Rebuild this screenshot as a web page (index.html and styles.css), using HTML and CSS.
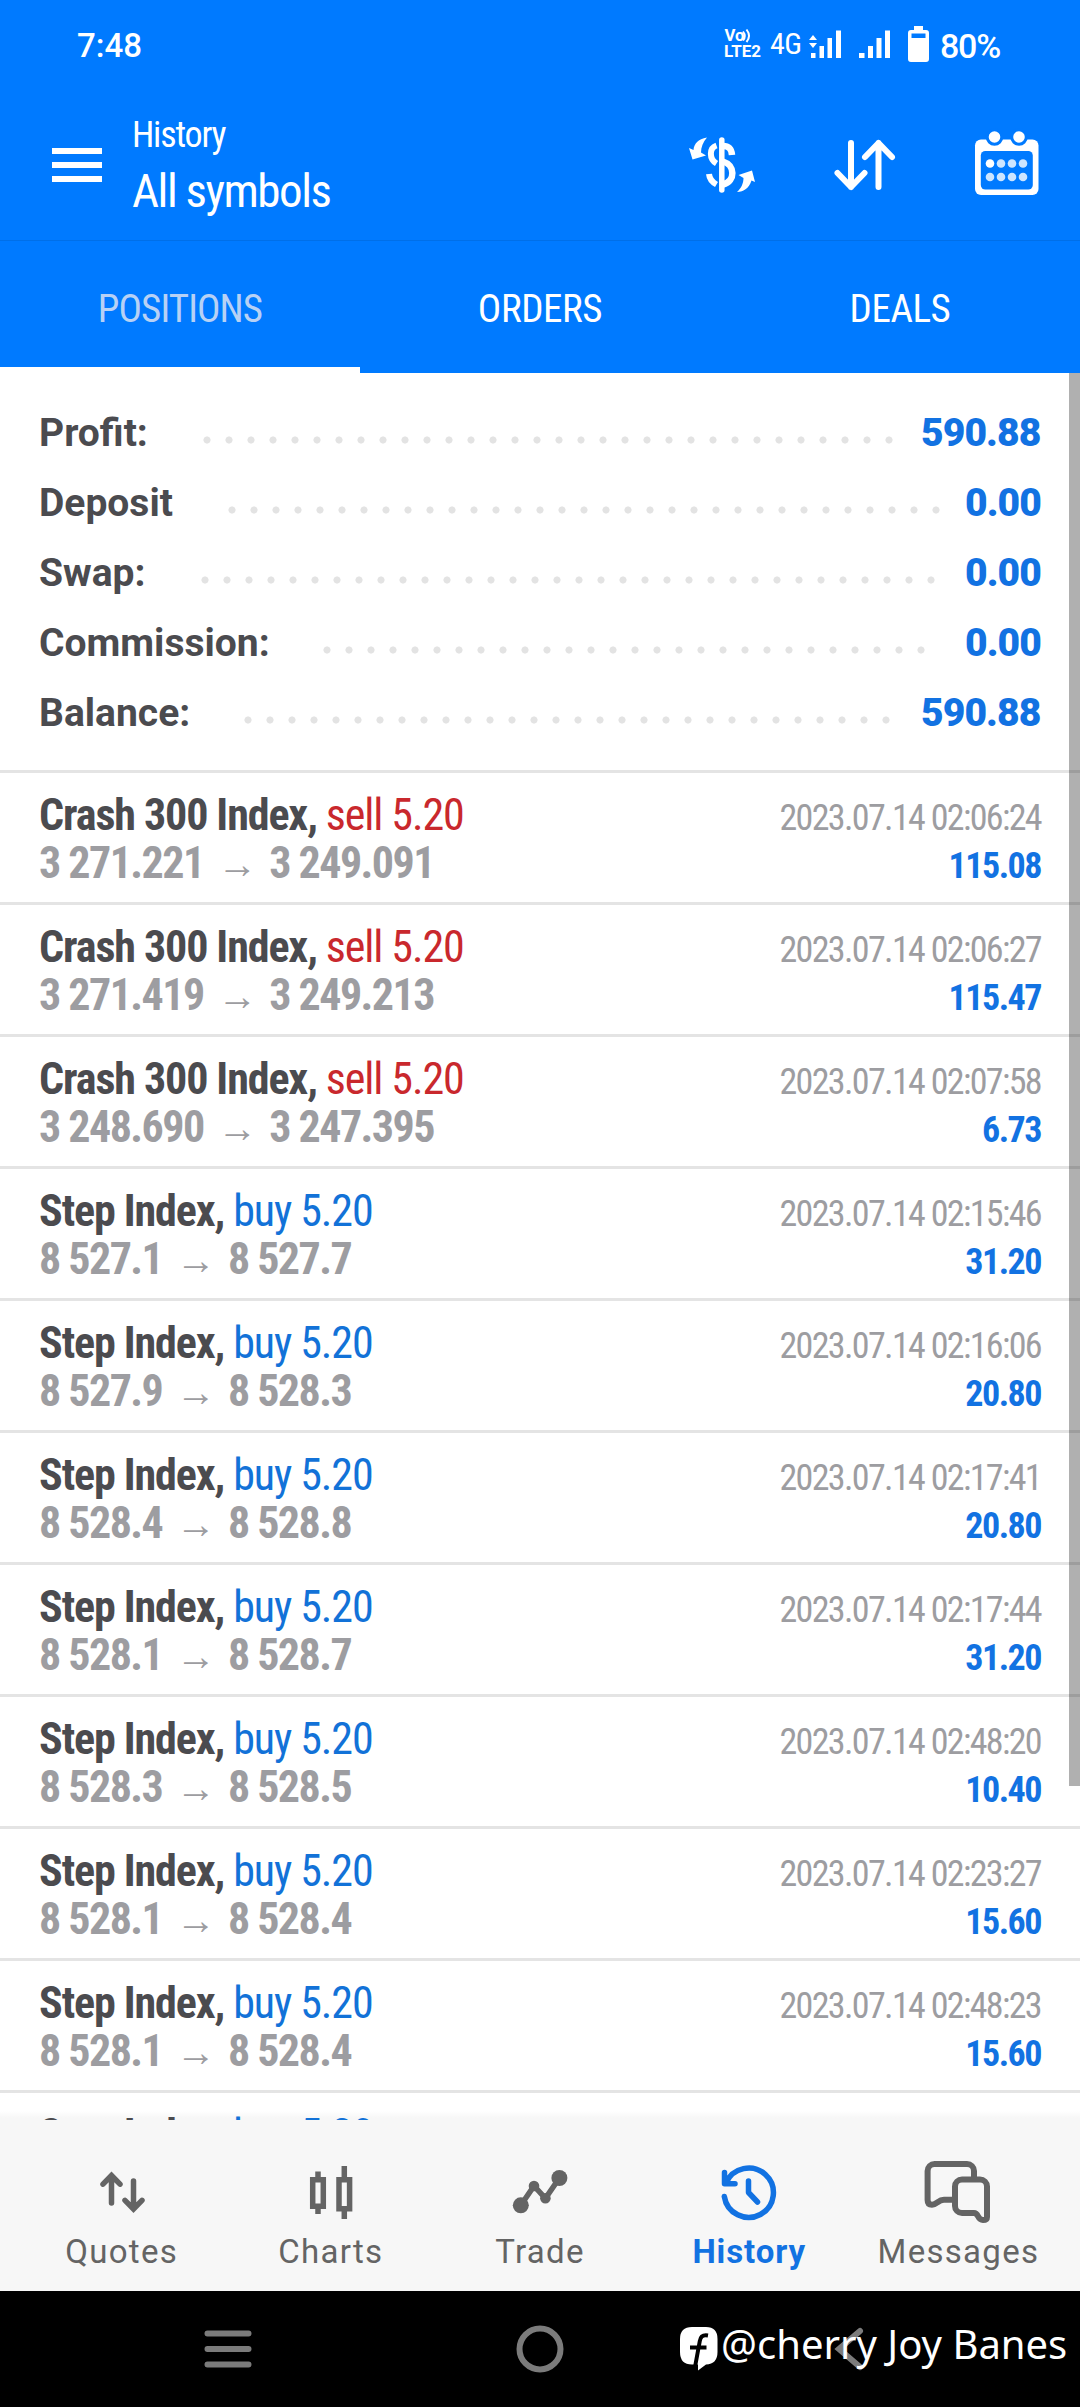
FILE: index.html
```html
<!DOCTYPE html>
<html lang="en">
<head>
<meta charset="utf-8">
<title>History</title>
<link rel="stylesheet" href="styles.css">
</head>
<body>
<div class="screen">
  <div class="statusbar">
    <span class="clock">7:48</span>
    <div class="status-right">
      <svg class="volte" width="40" height="34" viewBox="0 0 40 34">
        <text x="0.5" y="14" font-size="16.5" textLength="20" lengthAdjust="spacingAndGlyphs">Vo</text>
        <path d="M19 4.5q3.5 4.500 0 9M22.500 2.500q5 6.500 0 12.500" fill="none" stroke="#fff" stroke-width="2"/>
        <text x="0" y="30" font-size="17" textLength="37" lengthAdjust="spacingAndGlyphs">LTE2</text>
      </svg>
      <span class="net">4G</span>
      <svg class="signal" width="33" height="30" viewBox="0 0 33 30">
        <path d="M2 24h4.500v5H2zM10.500 17h4.500v12h-4.500zM18.500 9h4.500v20h-4.500zM27 1.500h5V29h-5zM4 6l4 5H0zM4 19l4-5H0z" fill="#fff"/>
      </svg>
      <svg class="signal2" width="32" height="30" viewBox="0 0 32 30">
        <path d="M0 24h5.500v5H0zM9 17h5v12H9zM17.500 9h5v20h-5zM26 1.500h5V29h-5z" fill="#fff"/>
      </svg>
      <svg class="battery" width="21" height="36" viewBox="0 0 21 36">
        <path fill-rule="evenodd" d="M6 0h9v4h3a3 3 0 0 1 3 3v26a3 3 0 0 1-3 3H3a3 3 0 0 1-3-3V7a3 3 0 0 1 3-3h3zM3.500 7.500v4.500h14V7.500z" fill="#fff"/>
      </svg>
      <span class="percent">80%</span>
    </div>
  </div>

  <header class="toolbar">
    <svg class="menu" width="50" height="34" viewBox="0 0 50 34"><path d="M0 0h50v6H0zM0 14h50v6H0zM0 28h50v6H0z" fill="#fff"/></svg>
    <div class="titles">
      <div class="subtitle">History</div>
      <div class="title">All symbols</div>
    </div>
    <div class="actions">
      <svg width="80" height="80" viewBox="0 0 80 80" fill="none" stroke="#fff" stroke-width="6">
        <path d="M41.800 20V70" stroke-width="5.500" stroke-linecap="round"/>
        <path d="M36.500 25.500C29 28 29 39 36.500 43.500M29 54C29.500 59.500 32 62 36.500 64.500"/>
        <path d="M43 26C49 26 51.500 29 52 35M43 41.500C55 45 56 61 43 64.500" stroke-width="6.500"/>
        <path d="M27 17.500C18 19 14 24 13.500 30L9 28L12.500 39.500L26 35.500L21 32.500C21 27 23 22 27 17.500ZM57 72C64 72 69 68 71.500 60.500L75 62L72 50.500L58.500 55L63.500 58C63.500 63 61.500 68 57 72Z" fill="#fff" stroke="none"/>
      </svg>
      <svg width="66" height="56" viewBox="0 0 66 56" fill="none" stroke="#fff" stroke-width="6" stroke-linecap="round" stroke-linejoin="round">
        <path d="M19 6V50M5.500 36L19 50L32.500 36M46.500 50V6M33 20L46.500 6L60 20"/>
      </svg>
      <svg width="64" height="64" viewBox="0 0 64 64">
        <rect x="0" y="8.500" width="63.500" height="55.500" rx="6" fill="#fff"/>
        <rect x="5.800" y="20" width="52" height="38.500" rx="4.500" fill="#007aff"/>
        <g fill="#fff" stroke="#007aff" stroke-width="3"><circle cx="19.500" cy="6" r="7.300"/><circle cx="44" cy="6" r="7.300"/></g>
        <g fill="#cde5ff"><circle cx="15" cy="32.500" r="4.300" fill="#fff"/><circle cx="26" cy="32.500" r="4.300"/><circle cx="37" cy="32.500" r="4.300"/><circle cx="48" cy="32.500" r="4.300"/><circle cx="15" cy="46" r="4.300"/><circle cx="26" cy="46" r="4.300"/><circle cx="37" cy="46" r="4.300"/><circle cx="48" cy="46" r="4.300"/></g>
      </svg>
    </div>
  </header>

  <nav class="tabs">
    <div class="tab active">POSITIONS</div>
    <div class="tab">ORDERS</div>
    <div class="tab">DEALS</div>
  </nav>

  <main class="content">
    <section class="summary">
      <div class="sum-row profit"><span>Profit:</span><i class="dots"></i><b>590.88</b></div>
      <div class="sum-row deposit"><span>Deposit</span><i class="dots"></i><b>0.00</b></div>
      <div class="sum-row swap"><span>Swap:</span><i class="dots"></i><b>0.00</b></div>
      <div class="sum-row commission"><span>Commission:</span><i class="dots"></i><b>0.00</b></div>
      <div class="sum-row balance"><span>Balance:</span><i class="dots"></i><b>590.88</b></div>
    </section>

    <section class="list">
      <article class="item"><div class="left"><div class="name">Crash 300 Index, <span class="sell">sell 5.20</span></div><div class="prices">3 271.221 <span class="arrow">→</span> 3 249.091</div></div><div class="right"><div class="date">2023.07.14 02:06:24</div><div class="gain">115.08</div></div></article>
      <article class="item"><div class="left"><div class="name">Crash 300 Index, <span class="sell">sell 5.20</span></div><div class="prices">3 271.419 <span class="arrow">→</span> 3 249.213</div></div><div class="right"><div class="date">2023.07.14 02:06:27</div><div class="gain">115.47</div></div></article>
      <article class="item"><div class="left"><div class="name">Crash 300 Index, <span class="sell">sell 5.20</span></div><div class="prices">3 248.690 <span class="arrow">→</span> 3 247.395</div></div><div class="right"><div class="date">2023.07.14 02:07:58</div><div class="gain">6.73</div></div></article>
      <article class="item"><div class="left"><div class="name">Step Index, <span class="buy">buy 5.20</span></div><div class="prices">8 527.1 <span class="arrow">→</span> 8 527.7</div></div><div class="right"><div class="date">2023.07.14 02:15:46</div><div class="gain">31.20</div></div></article>
      <article class="item"><div class="left"><div class="name">Step Index, <span class="buy">buy 5.20</span></div><div class="prices">8 527.9 <span class="arrow">→</span> 8 528.3</div></div><div class="right"><div class="date">2023.07.14 02:16:06</div><div class="gain">20.80</div></div></article>
      <article class="item"><div class="left"><div class="name">Step Index, <span class="buy">buy 5.20</span></div><div class="prices">8 528.4 <span class="arrow">→</span> 8 528.8</div></div><div class="right"><div class="date">2023.07.14 02:17:41</div><div class="gain">20.80</div></div></article>
      <article class="item"><div class="left"><div class="name">Step Index, <span class="buy">buy 5.20</span></div><div class="prices">8 528.1 <span class="arrow">→</span> 8 528.7</div></div><div class="right"><div class="date">2023.07.14 02:17:44</div><div class="gain">31.20</div></div></article>
      <article class="item"><div class="left"><div class="name">Step Index, <span class="buy">buy 5.20</span></div><div class="prices">8 528.3 <span class="arrow">→</span> 8 528.5</div></div><div class="right"><div class="date">2023.07.14 02:48:20</div><div class="gain">10.40</div></div></article>
      <article class="item"><div class="left"><div class="name">Step Index, <span class="buy">buy 5.20</span></div><div class="prices">8 528.1 <span class="arrow">→</span> 8 528.4</div></div><div class="right"><div class="date">2023.07.14 02:23:27</div><div class="gain">15.60</div></div></article>
      <article class="item"><div class="left"><div class="name">Step Index, <span class="buy">buy 5.20</span></div><div class="prices">8 528.1 <span class="arrow">→</span> 8 528.4</div></div><div class="right"><div class="date">2023.07.14 02:48:23</div><div class="gain">15.60</div></div></article>
      <article class="item partial"><div class="left"><div class="name">Step Index, <span class="buy">buy 5.20</span></div></div></article>
    </section>
    <div class="scrollbar"></div>
  </main>

  <nav class="bottomnav">
    <div class="nav-item">
      <svg width="80" height="70" viewBox="0 0 80 70" fill="none" stroke="#646464" stroke-width="5.500" stroke-linecap="round"><path d="M29.500 18.500V46M21 27.200L29.500 18.500L38 27.200M51.500 24V51.500M43 43.300L51.500 52L60 43.300"/></svg>
      <span>Quotes</span>
    </div>
    <div class="nav-item">
      <svg width="80" height="70" viewBox="0 0 80 70" fill="none" stroke="#646464" stroke-width="5.500"><path d="M21.700 22.700h10.600v26.600H21.700zM27 14.500v8M27 49.500v7.500M48 22.700h10.600v29H48zM53.300 9v13.500M53.300 52v10"/></svg>
      <span>Charts</span>
    </div>
    <div class="nav-item">
      <svg width="80" height="70" viewBox="0 0 80 70" fill="#646464"><path d="M20.800 48.300L34 29L45.400 41.300L59.400 21" fill="none" stroke="#646464" stroke-width="5.500"/><circle cx="20.800" cy="48.300" r="8"/><circle cx="34" cy="29" r="5.300"/><circle cx="45.400" cy="41.300" r="5.300"/><circle cx="59.400" cy="21" r="8"/></svg>
      <span>Trade</span>
    </div>
    <div class="nav-item current">
      <svg width="80" height="70" viewBox="0 0 80 70" fill="none" stroke="#1272e2" stroke-width="5.500" stroke-linecap="round" stroke-linejoin="round"><path d="M17 26A24.700 24.700 0 1 1 15.300 39.500M15.500 15.500V26.700H26M39.500 24V35.500L48.500 45"/></svg>
      <span>History</span>
    </div>
    <div class="nav-item">
      <svg width="80" height="70" viewBox="0 0 80 70" fill="none" stroke="#646464" stroke-width="6"><path d="M35 42.800H26C20 42.800 19 47.800 14 47.800C11 47.800 9.600 46 9.600 43V14a7 7 0 0 1 7-7H49a7 7 0 0 1 7 7V22M44 22.500H62a7 7 0 0 1 7 7V60C69 62 67.500 63 65 63C59 63 61 56 56 56H44a7 7 0 0 1-7-7V29.500a7 7 0 0 1 7-7Z"/></svg>
      <span>Messages</span>
    </div>
  </nav>

  <div class="sysnav">
    <div><svg width="50" height="50" viewBox="0 0 50 50"><path d="M4.500 10.500h41M4.500 26h41M4.500 41.500h41" transform="translate(0 -1)" stroke="#7b7b7b" stroke-width="6" stroke-linecap="round"/></svg></div>
    <div><svg width="50" height="50" viewBox="0 0 50 50"><circle cx="25" cy="25" r="20.500" fill="none" stroke="#7b7b7b" stroke-width="6"/></svg></div>
    <div><svg width="50" height="50" viewBox="0 0 50 50"><path d="M33 7L12 25L33 43" fill="none" stroke="#7b7b7b" stroke-width="6" stroke-linecap="round"/></svg></div>
    <div class="watermark">
      <svg width="38" height="44" viewBox="0 0 38 44"><path d="M12 0H26Q37.500 0 37.500 12V25Q37.500 37 26 37.500L18 43.500V37.500H12Q0 37.500 0 25V12Q0 0 12 0Z" fill="#fff"/><path d="M28 8.500C22 7.500 20.500 10 19.800 14L15 40M10 20.500H26.500" fill="none" stroke="#000" stroke-width="4"/></svg>
      <span>@cherry Joy Banes</span>
    </div>
  </div>
</div>
</body>
</html>
```
FILE: styles.css
```css
* { box-sizing: border-box; }
body { margin: 0; font-family: Roboto, sans-serif; }
svg { display: block; flex: none; }

.screen { width: 1080px; height: 2408px; display: flex; flex-direction: column; overflow: hidden; background: #fff; }

.statusbar { height: 91px; background: #007aff; color: #fff; display: flex; justify-content: space-between; align-items: center; padding: 0 79px 0 77px; font-weight: 500; font-size: 33px; }
.status-right { display: flex; align-items: center; }
.volte { margin-top: -3px; }
.volte text { fill: #fff; font-weight: 700; }
.net { font-family: "Roboto Condensed", Roboto, sans-serif; font-size: 30px; font-weight: 400; margin: -4px 10px 0 6px; width: 29px; letter-spacing: -0.5px; }
.signal { margin-top: -4px; margin-right: 17px; }
.signal2 { margin-top: -4px; margin-right: 17px; }
.battery { margin-top: -3px; margin-right: 11px; }
.percent { font-size: 34px; letter-spacing: -1.2px; width: 61px; }

.toolbar { height: 149px; background: #007aff; color: #fff; display: flex; align-items: flex-start; padding: 0 41px 0 52px; font-family: "Roboto Condensed", Roboto, sans-serif; }
.menu { margin-top: 57px; }
.titles { margin-left: 30px; padding-top: 19px; }
.subtitle { font-size: 36px; line-height: 50px; letter-spacing: -1.2px; }
.title { font-size: 47px; line-height: 62px; letter-spacing: -1.5px; }
.actions { margin-left: auto; display: flex; align-items: flex-start; }
.actions svg:nth-child(1) { margin: 29px 72px 0 0; }
.actions svg:nth-child(2) { margin: 46px 77px 0 0; }
.actions svg:nth-child(3) { margin-top: 40px; overflow: visible; }

.tabs { height: 133px; background: #007aff; color: #fff; display: flex; border-top: 1px solid #006fe8; font-family: "Roboto Condensed", Roboto, sans-serif; }
.tab { flex: 1; text-align: center; font-size: 39px; line-height: 126px; padding-top: 5px; border-bottom: 6px solid transparent; letter-spacing: -0.4px; }
.tab.active { color: #b7d1f5; border-color: #fff; letter-spacing: -0.9px; }

.content { position: relative; height: 1747px; overflow: hidden; }
.summary { height: 400px; padding: 25px 40px 0 39px; border-bottom: 3px solid #e4e4e4; }
.sum-row { height: 70px; display: flex; align-items: center; font-size: 39px; font-weight: 700; color: #4b4b4f; }
.sum-row b { color: #1272e2; width: 119px; letter-spacing: -0.9px; white-space: nowrap; }
.deposit b, .swap b, .commission b { width: 75px; }
.sum-row span { flex: none; }
.dots { flex: 1; height: 8px; margin-top: 13px; background: radial-gradient(circle at 4px 4px, #e3e3e3 3.2px, transparent 3.9px) 0 0 / 22px 8px repeat-x; }
.profit span { width: 163.500px; } .profit .dots { margin-right: 28px; }
.deposit span { width: 188.500px; } .deposit .dots { margin-right: 24px; }
.swap span { width: 161.500px; } .swap .dots { margin-right: 29px; }
.commission span { width: 283.500px; } .commission .dots { margin-right: 38px; }
.balance span { width: 204.500px; } .balance .dots { margin-right: 31px; }

.list { font-family: "Roboto Condensed", Roboto, sans-serif; }
.item { height: 132px; border-bottom: 3px solid #e4e4e4; display: flex; justify-content: space-between; padding: 18px 37px 0 39px; }
.partial { background: linear-gradient(#fff 18px, #f7f7f7 25px); }
.name, .prices { font-size: 44px; line-height: 48px; font-weight: 700; white-space: pre; }
.name { color: #4b4b4f; letter-spacing: -1.1px; }
.name span { font-weight: 400; }
.sell { color: #c9282d; }
.buy { color: #1272d8; }
.prices { color: #9d9da1; letter-spacing: -1.55px; }
.arrow { font-size: 40px; line-height: 40px; margin: 0 5px; }
.right { padding-top: 3px; text-align: right; font-size: 36px; line-height: 48px; }
.date { color: #9d9da1; letter-spacing: -1.65px; margin-right: 2px; }
.gain { color: #1272e2; font-weight: 700; letter-spacing: -1.5px; margin-right: 2px; }
.scrollbar { position: absolute; right: 0; top: 0; width: 11px; height: 1413px; background: rgba(0, 0, 0, 0.310); }

.bottomnav { height: 171px; background: #f7f7f7; display: flex; padding: 37px 17px 0; }
.nav-item { flex: 1; display: flex; flex-direction: column; align-items: center; font-size: 33px; line-height: 44px; color: #646464; letter-spacing: 1.300px; }
.nav-item span { margin-top: 3px; }
.current { color: #1272e2; font-weight: 700; letter-spacing: 0.9px; }

.sysnav { position: relative; height: 116px; background: #000; display: flex; padding: 0 72px; }
.sysnav > div { flex: 1; display: flex; justify-content: center; align-items: center; }
.sysnav > .watermark { position: absolute; left: 680px; top: 33px; display: flex; justify-content: flex-start; align-items: flex-start; gap: 3px; color: #fff; }
.watermark svg { margin-top: 3px; }
.watermark span { font-family: "Noto Sans", sans-serif; font-weight: 400; font-size: 40px; line-height: 40px; white-space: nowrap; }
```
